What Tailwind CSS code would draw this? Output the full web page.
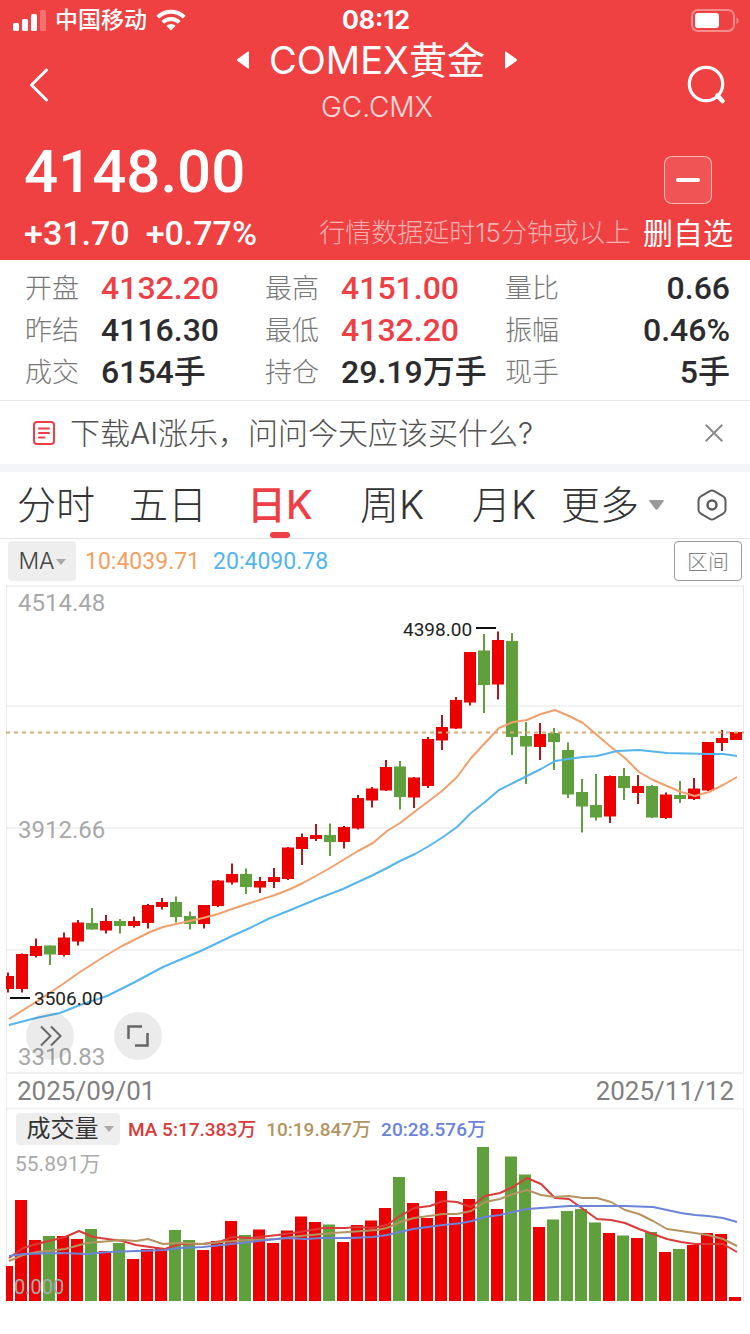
<!DOCTYPE html>
<html lang="zh-CN">
<head>
<meta charset="utf-8">
<meta name="viewport" content="width=device-width, initial-scale=1">
<title>COMEX黄金 GC.CMX</title>
<script src="https://cdn.jsdelivr.net/npm/@tailwindcss/browser@4"></script>
</head>
<body class="bg-white font-['Inter','Noto_Sans_CJK_SC',sans-serif] text-[#2c2c2e]">

<header class="bg-[#f04142] text-white">
  <div class="grid h-10 grid-cols-[1fr_auto_1fr] items-center pr-[11px] pl-[13px]">
    <div class="flex items-center gap-[9px]">
      <svg class="h-[21px] w-[33px]" viewBox="0 0 33 21" fill="currentColor" aria-hidden="true">
        <rect x="0" y="13" width="6" height="8" rx="1.5"/><rect x="9" y="9" width="6" height="12" rx="1.5"/><rect x="18" y="4" width="6" height="17" rx="1.5"/><rect x="27" y="0" width="6" height="21" rx="1.5" opacity=".25"/>
      </svg>
      <span class="text-[23px] leading-10 font-medium">中国移动</span>
      <svg class="h-[22px] w-[30px]" viewBox="0 0 30 22" aria-hidden="true">
        <g fill="none" stroke="currentColor" stroke-width="4"><path d="M1.8 8.2a18.8 18.8 0 0 1 26.4 0"/><path d="M6.8 13.4a11.6 11.6 0 0 1 16.4 0"/></g>
        <path d="M15 21.5l-4.6-4.7a6.6 6.6 0 0 1 9.2 0z" fill="currentColor"/>
      </svg>
    </div>
    <time class="text-[25px] leading-10 font-bold">08:12</time>
    <svg class="h-[23px] w-12 justify-self-end" viewBox="0 0 48 23" aria-hidden="true">
      <rect x="1" y="1" width="42" height="21" rx="6" fill="none" stroke="currentColor" stroke-width="2" opacity=".4"/>
      <rect x="4" y="4" width="24" height="15" rx="3" fill="currentColor"/>
      <path d="M45.500 8.500c2.700 1 2.700 5.500 0 6.500z" fill="currentColor" opacity=".4"/>
    </svg>
  </div>

  <nav class="grid h-[90px] grid-cols-[1fr_auto_1fr] items-center pr-6 pl-7">
    <button type="button" aria-label="返回" class="w-6 justify-self-start">
      <svg class="h-9 w-6" viewBox="0 0 24 36" fill="none" stroke="currentColor" stroke-width="3" stroke-linecap="round" stroke-linejoin="round"><path d="M18.500 3L3.500 18l15 15"/></svg>
    </button>
    <div class="h-[90px] text-center">
      <div class="flex items-center justify-center gap-5">
        <button type="button" aria-label="上一个"><svg class="h-5 w-3" viewBox="0 0 12 20" fill="currentColor"><path d="M12 2v16q0 1-1 .4L.5 11q-1-1 0-2L11 1.600q1-.6 1 .4z"/></svg></button>
        <h1 class="text-[38px] leading-10">COMEX黄金</h1>
        <button type="button" aria-label="下一个"><svg class="h-5 w-3" viewBox="0 0 12 20" fill="currentColor"><path d="M0 2v16q0 1 1 .4L11.500 11q1-1 0-2L1 1.600q-1-.6-1 .4z"/></svg></button>
      </div>
      <p class="pt-[9px] text-[28px] leading-9 font-light text-white/80">GC.CMX</p>
    </div>
    <button type="button" aria-label="搜索" class="justify-self-end">
      <svg class="h-10 w-10" viewBox="0 0 40 40" fill="none" stroke="currentColor" stroke-width="3.200"><circle cx="20" cy="19" r="16.700"/><path d="M31.500 30.500l5 5.500" stroke-width="4.500" stroke-linecap="round"/></svg>
    </button>
  </nav>

  <div class="flex items-end justify-between pt-[14px] pr-[17px] pb-[7px] pl-6">
    <div class="font-['Roboto',sans-serif] font-medium">
      <p class="text-[60px] leading-[56px]">4148.00</p>
      <p class="flex gap-4 pt-[13px] text-[34px] leading-10"><span>+31.70</span><span>+0.77%</span></p>
    </div>
    <div class="flex items-end gap-3">
      <p class="text-[26px] leading-10 font-light text-white/60">行情数据延时15分钟或以上</p>
      <button type="button" class="flex flex-col items-center gap-[9px]">
        <span class="flex size-12 items-center justify-center rounded-lg border border-white/60 bg-white/10"><span class="h-1 w-6 rounded-sm bg-white"></span></span>
        <span class="text-[30px] leading-10">删自选</span>
      </button>
    </div>
  </div>
</header>

<main>
  <section class="grid grid-cols-[240fr_240fr_225fr] border-b border-[#e6e6e6] pt-[7px] pr-5 pb-[7px] pl-[25px] text-[32px] leading-[42px]">
    <dl class="grid grid-cols-[76px_1fr] whitespace-nowrap [&_dt]:pt-px [&_dt]:text-[27px] [&_dt]:leading-[41px] [&_dt]:font-light [&_dt]:text-[#777] [&_dd]:font-['Roboto','Noto_Sans_CJK_SC',sans-serif] [&_dd]:font-medium">
      <dt>开盘</dt><dd class="text-[#ee3f47]">4132.20</dd>
      <dt>昨结</dt><dd>4116.30</dd>
      <dt>成交</dt><dd>6154手</dd>
    </dl>
    <dl class="grid grid-cols-[76px_1fr] whitespace-nowrap [&_dt]:pt-px [&_dt]:text-[27px] [&_dt]:leading-[41px] [&_dt]:font-light [&_dt]:text-[#777] [&_dd]:font-['Roboto','Noto_Sans_CJK_SC',sans-serif] [&_dd]:font-medium">
      <dt>最高</dt><dd class="text-[#ee3f47]">4151.00</dd>
      <dt>最低</dt><dd class="text-[#ee3f47]">4132.20</dd>
      <dt>持仓</dt><dd>29.19万手</dd>
    </dl>
    <dl class="grid grid-cols-[76px_1fr] whitespace-nowrap [&_dt]:pt-px [&_dt]:text-[27px] [&_dt]:leading-[41px] [&_dt]:font-light [&_dt]:text-[#777] [&_dd]:text-right [&_dd]:font-['Roboto','Noto_Sans_CJK_SC',sans-serif] [&_dd]:font-medium">
      <dt>量比</dt><dd>0.66</dd>
      <dt>振幅</dt><dd>0.46%</dd>
      <dt>现手</dt><dd>5手</dd>
    </dl>
  </section>

  <section class="flex h-[71px] items-center border-b-8 border-[#f4f5f9] pr-[26px] pl-[33px]">
    <svg class="h-6 w-[22px]" viewBox="0 0 22 24" fill="none" stroke="#ee3f47" stroke-width="2" aria-hidden="true"><rect x="1" y="1" width="20" height="22" rx="3"/><path d="M6 7.500h10M6 12h10M6 16.500h5.500" stroke-linecap="round"/></svg>
    <a href="#" class="pt-px pl-[15px] text-[30px] font-light text-[#505050]">下载AI涨乐，问问今天应该买什么?</a>
    <button type="button" aria-label="关闭" class="ml-auto p-px"><svg class="size-[18px]" viewBox="0 0 18 18" stroke="#8c8c8c" stroke-width="2"><path d="M.7.7l16.600 16.600M17.300.7L.7 17.300"/></svg></button>
  </section>

  <nav class="grid h-[67px] grid-cols-[repeat(5,112fr)_190fr] border-b border-[#e3e3e3] text-[39px] font-light text-[#333]">
    <button type="button">分时</button>
    <button type="button">五日</button>
    <button type="button" class="relative font-medium text-[#ee3f47]">日K<span class="absolute bottom-0 left-1/2 h-[6px] w-5 -translate-x-1/2 rounded-full bg-[#ee3f47]"></span></button>
    <button type="button">周K</button>
    <button type="button">月K</button>
    <div class="flex items-center justify-between pr-[23px] pl-px">
      <button type="button" class="flex items-center gap-[10px]">更多<svg class="h-[10px] w-[15px]" viewBox="0 0 15 10" fill="#999"><path d="M1 0h13q1.500 0 .6 1.200l-6 8q-1.100 1.200-2.200 0l-6-8Q-.5 0 1 0z"/></svg></button>
      <button type="button" aria-label="设置"><svg class="h-8 w-[30px]" viewBox="0 0 30 32" fill="none" stroke="#5c5c5c" stroke-width="2"><path d="M12.800 2.200q2.200-1.300 4.400 0l9 5.200q2.300 1.300 2.300 3.800v9.600q0 2.500-2.300 3.800l-9 5.200q-2.200 1.300-4.400 0l-9-5.200q-2.300-1.300-2.300-3.800v-9.600q0-2.500 2.300-3.800z"/><circle cx="15" cy="16" r="4.500" stroke-width="2.500"/></svg></button>
    </div>
  </nav>

  <section>
    <div class="flex h-[46px] items-center px-2 pb-[2px] font-['Roboto',sans-serif] text-[23px]">
      <button type="button" class="flex h-10 w-[68px] items-center justify-center gap-px rounded-[4px] bg-[#eee] pt-px font-['Inter'] text-[23px] font-light text-[#444]">MA<svg class="h-[6px] w-[10px]" viewBox="0 0 10 6" fill="#aaa"><path d="M0 0h10L5 6z"/></svg></button>
      <span class="pt-[3px] pl-[9px] text-[#f5a05f]">10:4039.71</span>
      <span class="pt-[3px] pl-[13px] text-[#52b5f0]">20:4090.78</span>
      <button type="button" class="ml-auto h-10 w-[68px] rounded-[4px] border border-[#999] font-['Noto_Sans_CJK_SC'] text-[21px] font-light text-[#808080]">区间</button>
    </div>
    <div class="relative">
      <svg id="price" class="block h-auto w-full font-['Roboto',sans-serif]" viewBox="0 585 750 487" role="img" aria-label="日K线图">
        <defs><clipPath id="plot"><rect x="6" y="585" width="738" height="720"/></clipPath></defs>
        <g stroke="#f2f2f2" stroke-width="2"><path d="M6 586H744M6 706H744M6 828H744M6 950H744"/></g>
        <path d="M6.500 585V1072M743.500 585V1072" stroke="#e8e8e8"/>
        <g fill="#a8a8a8" font-size="24"><text x="18" y="611">4514.48</text><text x="18" y="838">3912.66</text><text x="18" y="1065">3310.83</text></g>
        <g id="candles" clip-path="url(#plot)"></g>
        <path d="M6 732.500H744" stroke="#d3ac78" stroke-width="2" stroke-dasharray="4 4"/>
        <g fill="none" stroke-width="2" stroke-linejoin="round">
          <polyline stroke="#f0a06c" points="9,1019 36,1002 63,984 80,972 105,956 122,946 150,932 163,927 203,918 218,914 232,909 250,903 275,895 288,890 303,883 330,868 358,851 373,843 387,831 400,823 413,813 442,791 457,777 471,758 485,743 499,728 513,722 527,720 541,714 555,710 569,716 583,723 597,735 611,747 625,758 639,772 653,780 667,786 681,792 695,796 709,792 723,785 737,777"/>
          <polyline stroke="#55b5ec" points="9,1025 36,1018 60,1013 80,1005 107,996 135,982 163,967 203,950 232,936 250,928 268,919 288,911 317,899 343,889 358,882 373,875 387,868 400,861 415,854 429,846 443,837 457,827 471,813 485,802 499,790 513,783 541,769 555,761 568,759 583,757 597,756 617,751 639,750 667,753 709,754 723,754 737,756"/>
        </g>
        <path d="M476 628H496M10 998H30" stroke="#111" stroke-width="2"/>
        <g fill="#222" font-size="19"><text x="403" y="636">4398.00</text><text x="34" y="1005">3506.00</text></g>
      </svg>
      <button type="button" aria-label="展开" class="absolute bottom-3 left-[26px] flex size-12 items-center justify-center rounded-full bg-black/8"><svg class="size-6" viewBox="0 0 24 24" fill="none" stroke="#666" stroke-width="2"><path d="M3 2.500L12.500 12 3 21.500M13 2.500L22.500 12 13 21.500"/></svg></button>
      <button type="button" aria-label="全屏" class="absolute bottom-3 left-[114px] flex size-12 items-center justify-center rounded-full bg-black/8"><svg class="size-6" viewBox="0 0 24 24" fill="none" stroke="#666" stroke-width="2.500"><path d="M2.500 15V2.500H16M21.500 9v12.500H9"/></svg></button>
    </div>
    <div class="mx-[6px] flex h-9 items-center justify-between border-x border-t-2 border-[#f0f0f0] pr-[9px] pl-[10px] font-['Roboto',sans-serif] text-[26px] leading-8 text-[#808080]">
      <time>2025/09/01</time><time>2025/11/12</time>
    </div>
    <div class="grid">
      <svg class="col-start-1 row-start-1 block h-auto w-full font-['Roboto','Noto_Sans_CJK_SC',sans-serif]" viewBox="0 1108 750 194" role="img" aria-label="成交量图">
        <path d="M6 1108H744" stroke="#f0f0f0" stroke-width="3"/>
        <path d="M6.500 1108V1302M743.500 1108V1302" stroke="#e8e8e8"/>
        <g id="volumes" clip-path="url(#plot)"></g>
        <g fill="none" stroke-width="2" stroke-linejoin="round">
          <polyline stroke="#db3a3a" points="9,1258 23,1248 37,1244 65,1237 79,1231 93,1237 122,1241 136,1245 150,1247 165,1249 180,1244 203,1244 222,1241 232,1237 250,1238 278,1235 300,1232 323,1228 345,1228 357,1227 373,1228 387,1225 400,1216 414,1208 430,1206 443,1201 457,1202 471,1207 485,1196 500,1193 513,1187 527,1178 541,1184 555,1198 569,1199 583,1209 597,1219 611,1220 625,1223 639,1229 653,1234 667,1239 681,1242 695,1244 723,1244 737,1252"/>
          <polyline stroke="#b39461" points="9,1261 23,1255 37,1252 65,1249 87,1243 122,1240 136,1241 148,1239 163,1244 180,1243 203,1244 222,1242 250,1240 278,1239 300,1236 333,1233 377,1230 387,1228 400,1222 414,1218 443,1214 457,1214 471,1211 485,1202 500,1199 513,1194 527,1190 541,1195 555,1197 569,1196 583,1198 597,1198 611,1202 625,1210 639,1214 653,1221 667,1229 681,1231 708,1235 723,1239 737,1246"/>
          <polyline stroke="#6c83da" points="9,1256 23,1254 60,1253 87,1254 108,1252 165,1250 180,1248 203,1247 250,1242 285,1238 305,1239 322,1238 350,1238 373,1237 387,1235 400,1232 413,1229 428,1227 443,1225 462,1223 472,1221 485,1217 500,1215 513,1212 527,1209 541,1208 569,1206 625,1206 653,1207 667,1210 681,1213 695,1215 708,1216 723,1218 737,1222"/>
        </g>
        <g fill="#aaa"><text x="15" y="1171" font-size="21">55.891万</text><text x="14" y="1294" font-size="20">0.000</text></g>
      </svg>
      <div class="col-start-1 row-start-1 flex items-center self-start pt-1 pl-4 font-['Roboto','Noto_Sans_CJK_SC',sans-serif] text-[19px] leading-8 font-medium">
        <button type="button" class="flex h-8 w-[104px] items-center justify-center gap-[5px] rounded-[4px] bg-[#eee] pl-1 text-[24px] font-normal text-[#333]">成交量<svg class="h-[6px] w-[10px]" viewBox="0 0 10 6" fill="#aaa"><path d="M0 0h10L5 6z"/></svg></button>
        <span class="pt-[2px] pl-2 text-[#d93a3a]">MA 5:17.383万</span>
        <span class="pt-[2px] pl-[10px] text-[#b39461]">10:19.847万</span>
        <span class="pt-[2px] pl-[10px] text-[#6c83da]">20:28.576万</span>
      </div>
    </div>
  </section>
</main>

<script>
  // Each session: [rising, body top, body bottom, wick top, wick bottom, volume top], 14 units apart.
  const sessions = [
    [1,976,989,972.5,992.5,1266],[1,954,989,953.5,992.5,1200],[1,946,956,938.5,957.5,1240],[0,945.5,954.5,945.5,965,1236],
    [1,937.5,955,932.5,956.5,1236],[1,922.5,941.5,920,945.5,1239],[0,923,929.5,908,929.5,1229],[1,921,930.5,915,933.5,1251],
    [0,921,926,919,933.5,1243],[1,921,926,916.5,927.5,1259],[1,905,923,904,928.5,1249],[1,902,907,898,909.5,1248],
    [0,902,917,896.5,922.5,1230],[0,916,924,911.5,929.5,1240],[1,905,924,905,928.5,1250],[1,880.5,906,880,907,1241],
    [1,874,882.5,863.5,884.5,1221],[0,874,887,868.5,894,1235],[1,881,887.5,877,893,1229.5],[1,877,882,868,888,1243],
    [1,847.5,879,847,880,1230.5],[1,837,849,833.5,865,1216.5],[1,835,839,824,841,1222],[0,835,842,823.5,856,1224.5],
    [1,827,842,826,848.5,1242],[1,798,828.5,795,829.5,1225],[1,788.5,800.5,787,807.5,1220.5],[1,767,790.5,760,791,1208],
    [0,766.5,797,761,809.5,1177],[1,777.5,797.5,777,808,1203],[1,739,786,737,788,1218],[1,727,740.5,715,750,1191],
    [1,700,728.5,697,729,1217],[1,652,702.5,652,705.5,1199],[0,650.5,685,634,713,1147],[1,640,684.5,631.5,699.5,1209],
    [0,641,737,633,755,1156.5],[0,736,746.5,722,784,1174.5],[1,734,747,723,760,1227],[0,733,742,728,770,1219.5],
    [0,750,794.5,742.5,798,1211],[0,792,806.5,779,832.5,1209],[0,805,817.5,774,820.5,1222.5],[1,776,816.5,775.5,823,1233],
    [0,776,788,768,800,1235.5],[1,786,793,775,804,1238],[0,786,817.5,785,818,1232],[1,794.5,818,792.5,819,1252],
    [0,795,799,781,803,1249],[1,788.5,799,778,800,1245],[1,742,790.5,742,791,1233],[1,738,743,730,751,1234],[1,732,740,732,740,1297]
  ];
  const rect = (x, top, w, bottom, fill) => `<rect x="${x}" y="${top}" width="${w}" height="${bottom - top}" fill="${fill}"/>`;
  let candles = '', volumes = '';
  sessions.forEach(([up, top, bottom, high, low, vol], i) => {
    const x = 8 + 14 * i, body = up ? '#ec0000' : '#5f9f3c', wick = up ? '#b0181b' : '#5f9f3c';
    candles += rect(x - 1, high, 2, low, wick) + rect(x - 6, top, 12, bottom, body);
    volumes += rect(x - 7, vol, 12, 1301, body);
  });
  document.getElementById('candles').innerHTML = candles;
  document.getElementById('volumes').innerHTML = volumes;
</script>
</body>
</html>
